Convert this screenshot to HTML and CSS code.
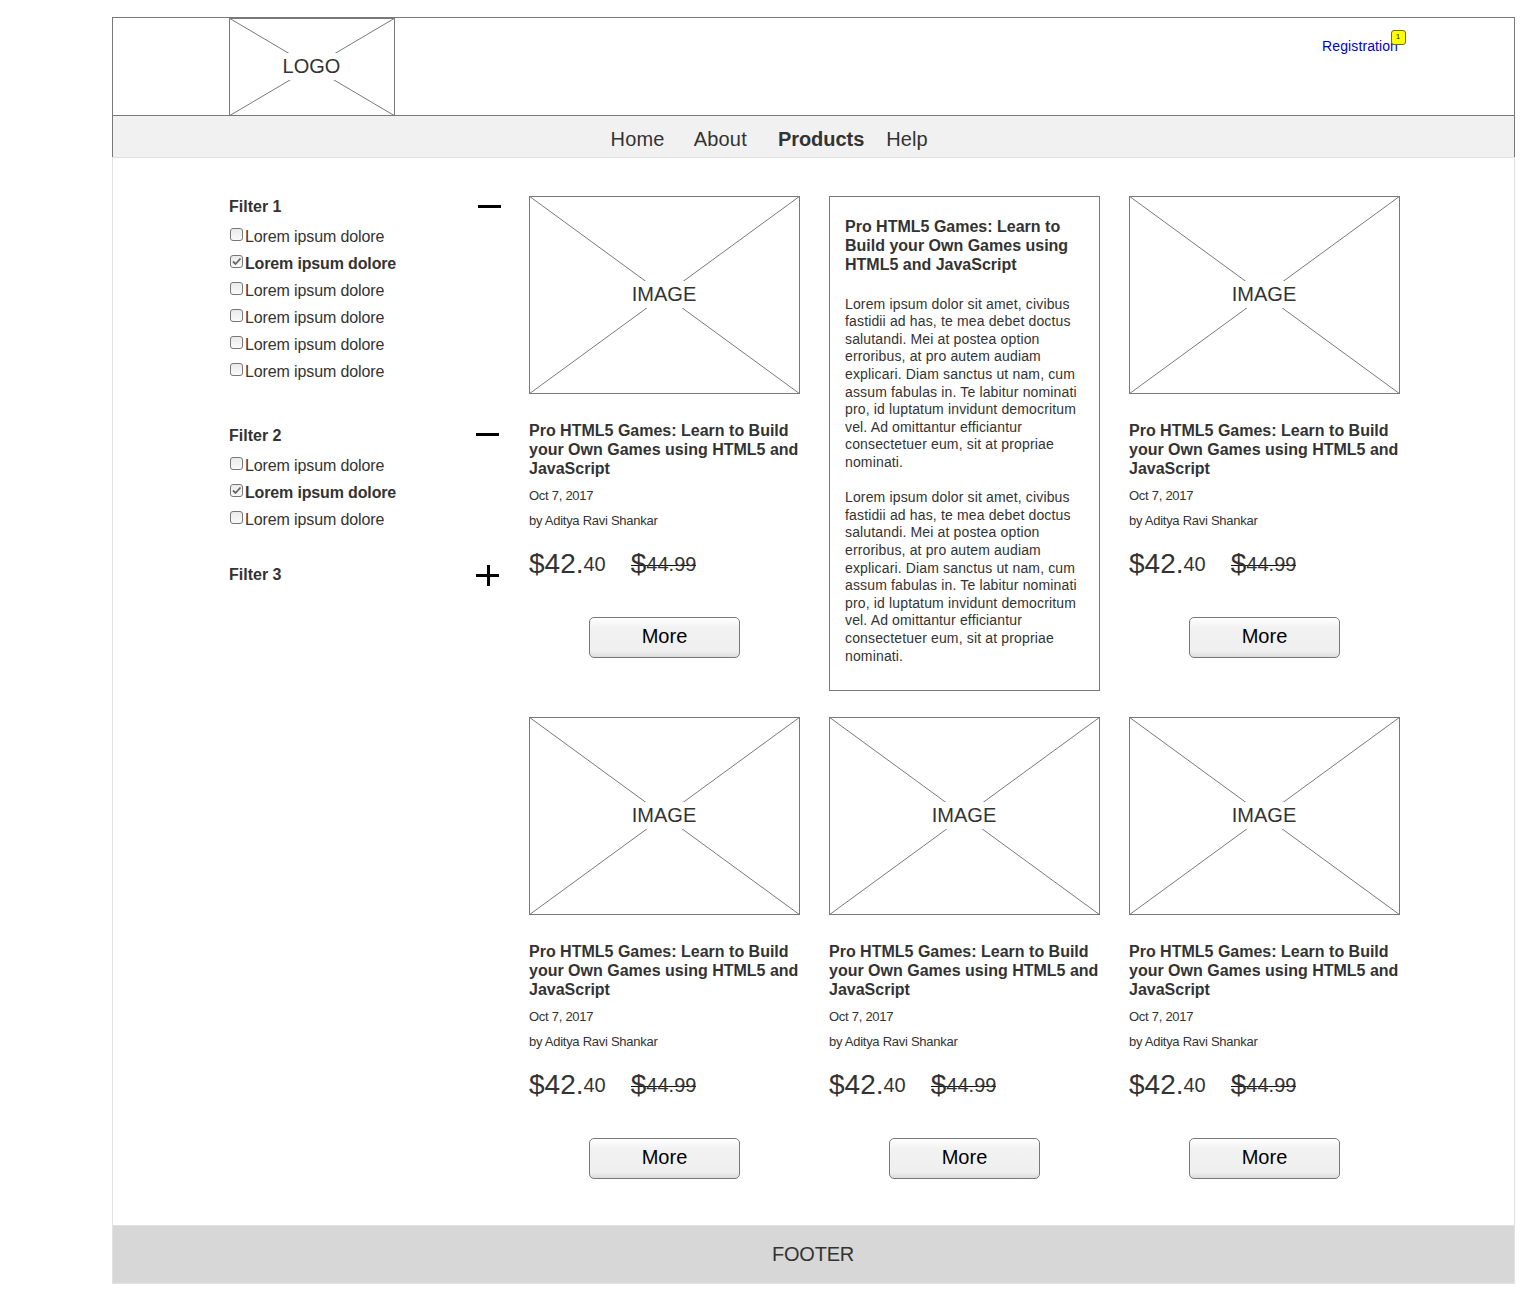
FILE: index.html
```html
<!DOCTYPE html>
<html lang="en">
<head>
<meta charset="utf-8">
<title>Products</title>
<link rel="stylesheet" href="styles.css">
</head>
<body>
<div class="page">
  <header class="header">
    <div class="placeholder logo">
      <svg class="cross" viewBox="0 0 166 98" preserveAspectRatio="none"><path d="M0 0L166 98M0 98L166 0"/></svg>
      <span class="placeholder-label">LOGO</span>
    </div>
    <a class="registration" href="#">Registration<span class="badge">1</span></a>
  </header>
  <nav class="nav">
    <a class="nav-home">Home</a>
    <a class="nav-about">About</a>
    <a class="nav-products">Products</a>
    <a class="nav-help">Help</a>
  </nav>
  <main class="main">
    <aside class="filters">
      <section class="filter filter-first">
        <div class="filter-head"><h3>Filter 1</h3><svg class="toggle" width="23" height="21"><path d="M0 9.5H23"/></svg></div>
        <ul>
          <li><span class="box"></span>Lorem ipsum dolore</li>
          <li class="checked"><span class="box"><svg width="11" height="11"><path d="M2 5.5L4.5 8L9.5 2.5"/></svg></span>Lorem ipsum dolore</li>
          <li><span class="box"></span>Lorem ipsum dolore</li>
          <li><span class="box"></span>Lorem ipsum dolore</li>
          <li><span class="box"></span>Lorem ipsum dolore</li>
          <li><span class="box"></span>Lorem ipsum dolore</li>
        </ul>
      </section>
      <section class="filter">
        <div class="filter-head"><h3>Filter 2</h3><svg class="toggle" width="23" height="21"><path d="M0 8.5H23"/></svg></div>
        <ul>
          <li><span class="box"></span>Lorem ipsum dolore</li>
          <li class="checked"><span class="box"><svg width="11" height="11"><path d="M2 5.5L4.5 8L9.5 2.5"/></svg></span>Lorem ipsum dolore</li>
          <li><span class="box"></span>Lorem ipsum dolore</li>
        </ul>
      </section>
      <section class="filter">
        <div class="filter-head"><h3>Filter 3</h3><svg class="toggle" width="23" height="21"><path d="M0 10.5H23M12.5 0V21"/></svg></div>
      </section>
    </aside>
    <div class="products">
      <article class="card">
        <div class="placeholder image"><svg class="cross" viewBox="0 0 271 198" preserveAspectRatio="none"><path d="M0 0L271 198M0 198L271 0"/></svg><span class="placeholder-label">IMAGE</span></div>
        <h2>Pro HTML5 Games: Learn to Build your Own Games using HTML5 and JavaScript</h2>
        <p class="meta">Oct 7, 2017</p>
        <p class="meta">by Aditya Ravi Shankar</p>
        <div class="prices"><span class="price">$42.<small>40</small></span><span class="old">$<small>44.99</small></span></div>
        <button class="more">More</button>
      </article>
      <article class="detail">
        <h2>Pro HTML5 Games: Learn to Build your Own Games using HTML5 and JavaScript</h2>
        <p>Lorem ipsum dolor sit amet, civibus<br>fastidii ad has, te mea debet doctus<br>salutandi. Mei at postea option<br>erroribus, at pro autem audiam<br>explicari. Diam sanctus ut nam, cum<br>assum fabulas in. Te labitur nominati<br>pro, id luptatum invidunt democritum<br>vel. Ad omittantur efficiantur<br>consectetuer eum, sit at propriae<br>nominati.</p>
        <p>Lorem ipsum dolor sit amet, civibus<br>fastidii ad has, te mea debet doctus<br>salutandi. Mei at postea option<br>erroribus, at pro autem audiam<br>explicari. Diam sanctus ut nam, cum<br>assum fabulas in. Te labitur nominati<br>pro, id luptatum invidunt democritum<br>vel. Ad omittantur efficiantur<br>consectetuer eum, sit at propriae<br>nominati.</p>
      </article>
      <article class="card">
        <div class="placeholder image"><svg class="cross" viewBox="0 0 271 198" preserveAspectRatio="none"><path d="M0 0L271 198M0 198L271 0"/></svg><span class="placeholder-label">IMAGE</span></div>
        <h2>Pro HTML5 Games: Learn to Build your Own Games using HTML5 and JavaScript</h2>
        <p class="meta">Oct 7, 2017</p>
        <p class="meta">by Aditya Ravi Shankar</p>
        <div class="prices"><span class="price">$42.<small>40</small></span><span class="old">$<small>44.99</small></span></div>
        <button class="more">More</button>
      </article>
      <article class="card">
        <div class="placeholder image"><svg class="cross" viewBox="0 0 271 198" preserveAspectRatio="none"><path d="M0 0L271 198M0 198L271 0"/></svg><span class="placeholder-label">IMAGE</span></div>
        <h2>Pro HTML5 Games: Learn to Build your Own Games using HTML5 and JavaScript</h2>
        <p class="meta">Oct 7, 2017</p>
        <p class="meta">by Aditya Ravi Shankar</p>
        <div class="prices"><span class="price">$42.<small>40</small></span><span class="old">$<small>44.99</small></span></div>
        <button class="more">More</button>
      </article>
      <article class="card">
        <div class="placeholder image"><svg class="cross" viewBox="0 0 271 198" preserveAspectRatio="none"><path d="M0 0L271 198M0 198L271 0"/></svg><span class="placeholder-label">IMAGE</span></div>
        <h2>Pro HTML5 Games: Learn to Build your Own Games using HTML5 and JavaScript</h2>
        <p class="meta">Oct 7, 2017</p>
        <p class="meta">by Aditya Ravi Shankar</p>
        <div class="prices"><span class="price">$42.<small>40</small></span><span class="old">$<small>44.99</small></span></div>
        <button class="more">More</button>
      </article>
      <article class="card">
        <div class="placeholder image"><svg class="cross" viewBox="0 0 271 198" preserveAspectRatio="none"><path d="M0 0L271 198M0 198L271 0"/></svg><span class="placeholder-label">IMAGE</span></div>
        <h2>Pro HTML5 Games: Learn to Build your Own Games using HTML5 and JavaScript</h2>
        <p class="meta">Oct 7, 2017</p>
        <p class="meta">by Aditya Ravi Shankar</p>
        <div class="prices"><span class="price">$42.<small>40</small></span><span class="old">$<small>44.99</small></span></div>
        <button class="more">More</button>
      </article>
    </div>
  </main>
  <footer class="footer">FOOTER</footer>
</div>
</body>
</html>
```
FILE: styles.css
```css
* { box-sizing: border-box; margin: 0; padding: 0; }
body {
  background: #fff;
  color: #333;
  font: 16px/19px "Liberation Sans", Arial, sans-serif;
}
.page { width: 1403px; margin: 17px 0 0 112px; }

.header {
  display: flex;
  justify-content: space-between;
  height: 99px;
  padding: 0 116px 0 116px;
  border: 1px solid #797979;
}
.placeholder {
  display: grid;
  align-items: center;
  border: 1px solid #797979;
  font-size: 20px;
  line-height: 27px;
  text-align: center;
}
.placeholder > * { grid-area: 1 / 1; }
.placeholder-label { z-index: 1; margin: 0 2px 2px 1px; background: #fff; }
.cross {
  width: calc(100% + 2px);
  height: calc(100% + 2px);
  margin: -1px;
  fill: none;
  stroke: #797979;
  stroke-width: 1;
}
.logo { width: 166px; height: 98px; }
.image { width: 271px; height: 198px; }

.registration {
  position: relative;
  align-self: flex-start;
  margin-top: 20px;
  color: #00c;
  font-size: 14px;
  line-height: 17px;
  letter-spacing: .1px;
  text-decoration: none;
}
.badge {
  position: absolute;
  top: -8px;
  right: -8px;
  width: 15px;
  height: 15px;
  padding-right: 1px;
  border: 1px solid #6b6b1c;
  border-radius: 3px;
  background: #ff0;
  color: #222;
  font-size: 8px;
  line-height: 11px;
  text-align: center;
}

.nav {
  display: flex;
  height: 41px;
  padding: 12px 0 0 497.5px;
  border: solid #797979;
  border-width: 0 1px;
  background: #f1f1f1;
  font-size: 20px;
  line-height: 23px;
  letter-spacing: .2px;
}
.nav-about { margin-left: 29px; }
.nav-products { margin-left: 31px; font-weight: bold; letter-spacing: -.05px; }
.nav-help { margin-left: 22px; letter-spacing: .1px; }

.main {
  display: flex;
  height: 1068px;
  padding: 38px 114px 0 116px;
  border: solid #e2e2e2;
  border-width: 1px 1px 0;
}
.filters { width: 300px; flex: none; padding-top: 1px; }
.filter { margin-bottom: 32px; }
.filter-first { margin-bottom: 41px; }
.filter-head { display: flex; justify-content: space-between; height: 18px; padding-right: 30px; }
.filter-first .filter-head { padding-right: 28px; }
.filter-head h3 { font-size: 16px; line-height: 20px; }
.toggle { stroke: #000; stroke-width: 3; }
.filter ul { margin-top: 8px; list-style: none; }
.filter li { display: flex; height: 27px; line-height: 27px; letter-spacing: -.12px; }
.filter .checked { font-weight: bold; letter-spacing: -.15px; }
.box {
  width: 13px;
  height: 13px;
  margin: 5px 2px 0 1px;
  border: 1px solid #777;
  border-radius: 3px;
  background: linear-gradient(#eaeaea, #fafafa);
}
.box svg { display: block; fill: none; stroke: #666; stroke-width: 1.8; }

.products {
  display: grid;
  grid-template-columns: repeat(3, 271px);
  grid-template-rows: 495px 495px;
  gap: 26px 29px;
  align-content: start;
}
h2 { font-size: 16px; line-height: 19px; }
.card h2 { margin-top: 27px; }
.meta { margin-top: 10px; font-size: 13px; line-height: 15px; letter-spacing: -.27px; }
.prices { display: flex; gap: 25px; height: 32px; margin-top: 20px; font-size: 28px; line-height: 32px; }
.prices small { font-size: 20px; line-height: 20px; vertical-align: 2px; }
.old { background: linear-gradient(#111, #111) 0 17px / 100% 1px no-repeat; }
.more {
  display: block;
  width: 151px;
  height: 41px;
  margin: 37px auto 0;
  padding-bottom: 3px;
  border: 1px solid #797979;
  border-radius: 5px;
  background: linear-gradient(#fff, #f2f2f2 25%, #efefef 85%, #dcdcdc);
  color: #000;
  font: 20px/23px "Liberation Sans", Arial, sans-serif;
}
.detail { padding: 20px 15px 0; border: 1px solid #797979; }
.detail p { font-size: 14px; line-height: 17.6px; letter-spacing: .15px; white-space: nowrap; }
.detail h2 { margin-bottom: 21.7px; }
.detail p + p { margin-top: 17.6px; }

.footer {
  height: 59px;
  padding-right: 1px;
  border: 1px solid #e2e2e2;
  background: #d7d7d7;
  font-size: 20px;
  line-height: 57px;
  letter-spacing: -.2px;
  text-align: center;
}
```
